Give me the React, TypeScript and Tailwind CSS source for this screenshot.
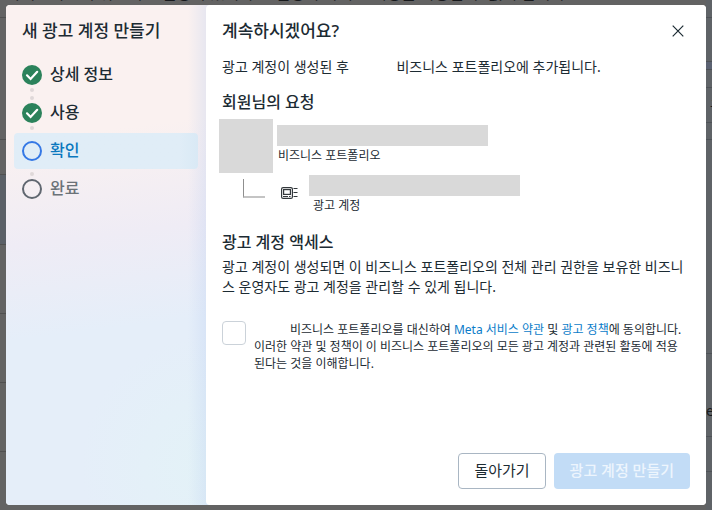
import React from 'react';

type StepState = 'done' | 'current' | 'upcoming';

interface Step {
  label: string;
  state: StepState;
}

const steps: Step[] = [
  { label: '상세 정보', state: 'done' },
  { label: '사용', state: 'done' },
  { label: '확인', state: 'current' },
  { label: '완료', state: 'upcoming' },
];

const StepIcon: React.FC<{ state: StepState }> = ({ state }) => {
  if (state === 'done') {
    return (
      <svg viewBox="0 0 20 20" className="size-5 shrink-0" aria-hidden="true">
        <circle cx="10" cy="10" r="10" fill="#2b825b" />
        <path d="M5 10.3 8.6 14 15.2 6.8" fill="none" stroke="#fff" strokeWidth="2.2" strokeLinecap="round" />
      </svg>
    );
  }
  return (
    <span
      className={`size-5 shrink-0 rounded-full border-2 ${
        state === 'current' ? 'border-[#3578e5]' : 'border-[#606770]'
      }`}
    />
  );
};

const Dot: React.FC<{ visible: boolean }> = ({ visible }) => (
  <span className={`size-1 rounded-full ${visible ? 'bg-[#dfd8d9]' : ''}`} />
);

const StepRow: React.FC<{ step: Step; first: boolean; last: boolean }> = ({ step, first, last }) => {
  const current = step.state === 'current';
  return (
    <li
      aria-current={current ? 'step' : undefined}
      className={`flex h-9 items-center gap-2 rounded px-2 ${
        current ? 'bg-linear-to-l from-[#d9e9f5] to-[#e0edf7] to-10%' : ''
      }`}
    >
      <span className="flex h-full flex-col items-center justify-between py-px">
        <Dot visible={!first && !current} />
        <StepIcon state={step.state} />
        <Dot visible={!last && !current} />
      </span>
      <span
        className={`pb-0.5 text-base leading-5 font-medium ${
          current ? 'text-[#0a78be]' : step.state === 'done' ? 'text-[#1c2b33]' : 'text-[#6b7278]'
        }`}
      >
        {step.label}
      </span>
    </li>
  );
};

// The last 4px run under the rounded corners of the content pane
const Sidebar: React.FC = () => (
  <aside className="-mr-1 w-51 shrink-0 bg-[linear-gradient(to_left,rgb(185_205_240/0.35),transparent_22px),radial-gradient(circle_at_100%_92%,#e3f2f7_0%,rgb(227_242_247/0)_130px),linear-gradient(173deg,#faf1f0_0%,#faf1f0_26%,#efecf5_46%,#e5eef9_64%,#e5eef9_100%)] pt-4 pr-3 pl-2">
    <h1 className="px-2 text-[17px] leading-5 font-medium">새 광고 계정 만들기</h1>
    <ol className="mt-4 flex flex-col gap-0.5">
      {steps.map((step, i) => (
        <StepRow key={step.label} step={step} first={i === 0} last={i === steps.length - 1} />
      ))}
    </ol>
  </aside>
);

const AdAccountIcon: React.FC = () => (
  <svg viewBox="0 0 17 12" className="h-3 w-[17px] shrink-0" fill="none" stroke="#33383c" aria-hidden="true">
    <rect x="0.6" y="0.6" width="10.8" height="10.8" rx="1.5" strokeWidth="1.2" />
    <rect x="2.6" y="2.6" width="6.8" height="4.8" strokeWidth="1.2" />
    <path d="M2 9.5h5M8 9.5h1.5M12.5 1.5h4M12.5 5.5h4M12.5 9.5h4" strokeWidth="1" />
  </svg>
);

const RequestTree: React.FC = () => (
  <div className="-ml-[3px]">
    <div className="flex gap-1">
      <div className="size-[54px] shrink-0 bg-[#d9d9d9]" />
      <div className="min-w-0 pt-1.5">
        <div className="h-[21px] w-[211px] max-w-full bg-[#d9d9d9]" />
        <p className="mt-0.5 px-px text-xs leading-4">비즈니스 포트폴리오</p>
      </div>
    </div>
    <div className="mt-0.5 flex">
      <div className="mt-1 ml-6 h-[19px] w-[22px] shrink-0 border-b-2 border-l border-b-[#c4c4c4] border-l-[#8f8f8f]" />
      <div className="mt-3 ml-4">
        <AdAccountIcon />
      </div>
      <div className="ml-[11px] min-w-0">
        <div className="h-[21px] w-[211px] max-w-full bg-[#d9d9d9]" />
        <p className="mt-0.5 px-1 text-xs leading-4">광고 계정</p>
      </div>
    </div>
  </div>
);

// Dimmed page that stays partly visible around the dialog
const PageBehind: React.FC = () => (
  <div aria-hidden="true" className="absolute inset-0 flex justify-between overflow-hidden bg-[#636363]">
    <div className="flex w-1.5 flex-col *:shrink-0 *:border-b *:border-[#505050]">
      <div className="h-[18px]" />
      <div className="h-[122px]" />
      <div className="h-[35px]" />
      <div className="h-[70px] bg-[#5b6067]" />
      <div className="h-[69px]" />
      <div className="h-[69px]" />
      <div className="h-[69px]" />
    </div>
    <p className="-mt-[17px] min-w-0 flex-1 text-base leading-5 whitespace-nowrap text-[#17191c]">
      가이드라인에 위반되는 설정이 있거나 ... 설정이 바뀌면 계정을 사용할 수 없게 됩니다.
    </p>
    <div className="flex w-1.5 shrink-0 flex-col bg-[#5f6367] text-sm text-[#17191c] *:shrink-0 *:border-b *:border-[#4e5257]">
      <div className="h-[18px]" />
      <div className="h-11" />
      <div className="h-2 bg-[#5b6272]" />
      <div className="h-[18px]" />
      <div className="h-[35px] pt-2 pl-1">규</div>
      <div className="h-[17px]" />
      <div className="h-[214px]" />
      <div className="h-[83px] pt-[47px] leading-5">e</div>
      <div className="h-[35px]" />
    </div>
  </div>
);

export default function App() {
  return (
    <div
      lang="ko"
      className="relative flex min-h-screen px-1.5 py-[5px] font-['Noto_Sans','Noto_Sans_CJK_KR',sans-serif] text-[#1c2b33]"
    >
      <PageBehind />
      <div
        role="dialog"
        aria-modal="true"
        aria-labelledby="dialog-title"
        className="relative flex flex-1 overflow-hidden rounded bg-white"
      >
        <Sidebar />
        <main className="flex min-w-0 flex-1 flex-col rounded-l bg-white px-4 pt-4 pb-4">
          <header className="flex items-center justify-between">
            <h2 id="dialog-title" className="text-[17px] leading-5 font-medium">
              계속하시겠어요?
            </h2>
            <button type="button" aria-label="닫기" className="px-1.5 py-1">
              <svg viewBox="0 0 12 12" className="size-3" stroke="#1c2b33" strokeWidth="1.2" aria-hidden="true">
                <path d="M.7.7 11.3 11.3M11.3.7.7 11.3" />
              </svg>
            </button>
          </header>

          <p className="mt-4 text-sm leading-5">
            광고 계정이 생성된 후<span className="inline-block w-11" /> 비즈니스 포트폴리오에 추가됩니다.
          </p>

          <section className="mt-[15px]">
            <h3 className="mb-[7px] text-base leading-5 font-medium">회원님의 요청</h3>
            <RequestTree />
          </section>

          <section className="mt-4">
            <h3 className="mb-[3px] text-base leading-6 font-medium">광고 계정 액세스</h3>
            <p className="text-sm leading-5">
              광고 계정이 생성되면 이 비즈니스 포트폴리오의 전체 관리 권한을 보유한 비즈니스 운영자도 광고 계정을
              관리할 수 있게 됩니다.
            </p>
          </section>

          <div className="mt-6 flex items-start gap-2">
            <input
              id="agree"
              type="checkbox"
              className="size-6 shrink-0 appearance-none rounded border border-[#cbd2d9] bg-white checked:bg-[#0a78be]"
            />
            <label htmlFor="agree" className="pr-2 text-xs leading-[17px]">
              <span className="inline-block w-9" />
              비즈니스 포트폴리오를 대신하여{' '}
              <a href="#terms" className="text-[#0a7cc9]">
                Meta 서비스 약관
              </a>{' '}
              및{' '}
              <a href="#policy" className="text-[#0a7cc9]">
                광고 정책
              </a>
              에 동의합니다. 이러한 약관 및 정책이 이 비즈니스 포트폴리오의 모든 광고 계정과 관련된 활동에 적용된다는
              것을 이해합니다.
            </label>
          </div>

          <footer className="mt-auto flex justify-end gap-2 text-[15px] leading-5">
            <button type="button" className="h-9 rounded border border-[#a9b6c3] bg-white px-[15px] pb-0.5">
              돌아가기
            </button>
            <button
              type="button"
              disabled
              className="h-9 rounded bg-[#c2dcf6] px-4 pb-0.5 font-medium text-[#edf5fd]"
            >
              광고 계정 만들기
            </button>
          </footer>
        </main>
      </div>
    </div>
  );
}
